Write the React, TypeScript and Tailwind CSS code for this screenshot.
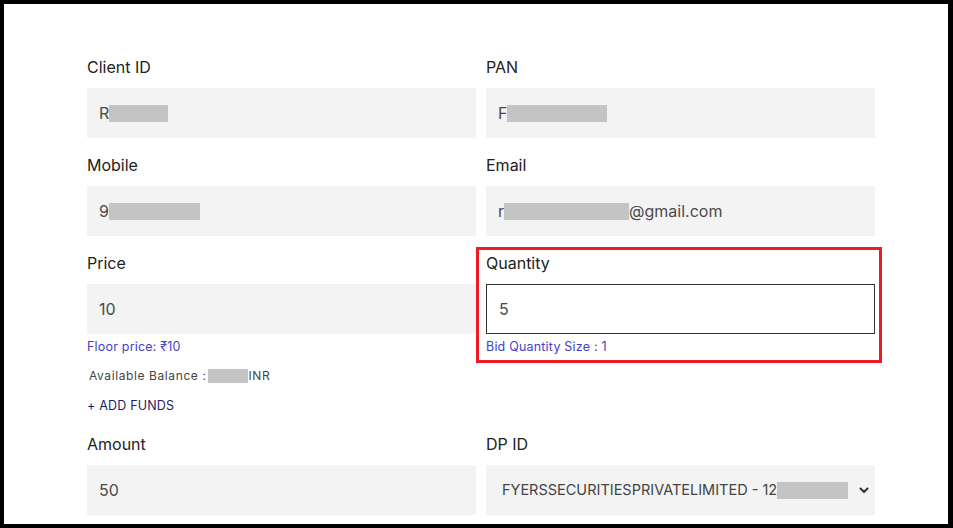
import React from "react";

const font = { fontFamily: "Inter, 'Noto Sans', sans-serif" };

function Redact({ w }: { w: number }) {
  return <span className="inline-block h-[17px] bg-[#c4c4c4] align-middle shrink-0" style={{ width: w }} />;
}

function Label({ children }: { children: React.ReactNode }) {
  return <div className="h-[22px] mb-[10px] text-[16px] leading-[22px] text-[#222]">{children}</div>;
}

function Field({ children, bordered }: { children: React.ReactNode; bordered?: boolean }) {
  return (
    <div
      className={
        "h-[50px] flex items-center pl-[12px] text-[16px] text-[#4a4a4a] " +
        (bordered ? "bg-white border border-[#333]" : "bg-[#f3f3f3]")
      }
    >
      {children}
    </div>
  );
}

export default function App() {
  return (
    <div className="w-[953px] h-[528px] bg-black pt-[4px] pl-[4px] pr-[5px] pb-[4px]" style={font}>
      <div className="w-full h-full bg-white pl-[83px] pt-[52px] overflow-hidden">
        <div className="w-[788px] grid grid-cols-2 gap-x-[10px]">
          <div className="mb-[16px]">
            <Label>Client ID</Label>
            <Field>
              <span>R</span>
              <Redact w={59} />
            </Field>
          </div>
          <div className="mb-[16px]">
            <Label>PAN</Label>
            <Field>
              <span>F</span>
              <Redact w={100} />
            </Field>
          </div>
          <div className="mb-[16px]">
            <Label>Mobile</Label>
            <Field>
              <span>9</span>
              <Redact w={91} />
            </Field>
          </div>
          <div className="mb-[16px]">
            <Label>Email</Label>
            <Field>
              <span>r</span>
              <Redact w={125} />
              <span>@gmail.com</span>
            </Field>
          </div>
          <div>
            <Label>Price</Label>
            <Field>10</Field>
            <div className="mt-[6px] h-[14px] text-[12.5px] leading-[14px] text-[#3f3fc9] tracking-[0.2px]">Floor price: ₹10</div>
            <div className="mt-[15px] h-[14px] pl-[2px] text-[12px] leading-[14px] text-[#444] tracking-[0.6px] flex items-center whitespace-nowrap">
              <span>Available Balance :</span>
              <span className="inline-block h-[14px] w-[40px] bg-[#c4c4c4] ml-[2px]" />
              <span>INR</span>
            </div>
            <div className="mt-[16px] h-[14px] text-[12.5px] leading-[14px] text-[#1f1d66] tracking-[0.2px]">+ ADD FUNDS</div>
          </div>
          <div className="relative">
            <div className="absolute left-[-10px] right-[-7px] top-[-5px] h-[116px] border-[3px] border-[#ec1c24] pointer-events-none" />
            <Label>Quantity</Label>
            <Field bordered>5</Field>
            <div className="mt-[6px] h-[14px] text-[12.5px] leading-[14px] text-[#3f3fc9] tracking-[0.2px]">Bid Quantity Size : 1</div>
          </div>
          <div className="mt-[20px]">
            <Label>Amount</Label>
            <Field>50</Field>
          </div>
          <div className="mt-[20px]">
            <Label>DP ID</Label>
            <div className="h-[50px] flex items-center bg-[#f3f3f3] pl-[16px] pr-[5px] text-[14.5px] text-[#444] whitespace-nowrap">
              <span>FYERSSECURITIESPRIVATELIMITED - 12</span>
              <Redact w={71} />
              <span className="flex-1" />
              <svg width="12" height="12" viewBox="0 0 12 12" fill="none">
                <path d="M2.5 4.5 L6 8 L9.5 4.5" stroke="#333" strokeWidth="2" strokeLinecap="round" strokeLinejoin="round" />
              </svg>
            </div>
          </div>
        </div>
      </div>
    </div>
  );
}
